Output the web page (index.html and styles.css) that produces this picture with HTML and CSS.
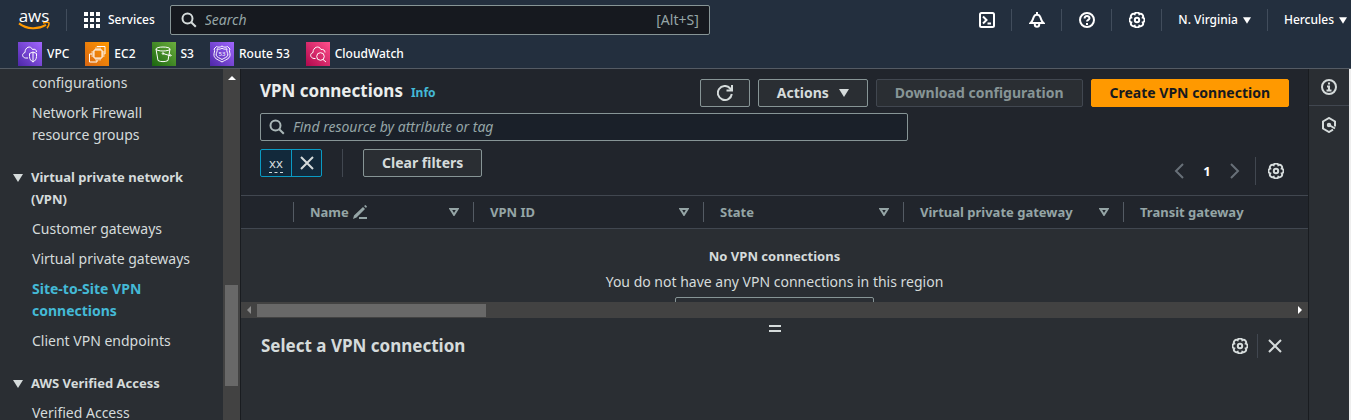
FILE: index.html
```html
<!DOCTYPE html>
<html lang="en">
<head>
<meta charset="utf-8">
<title>VPN connections</title>
<link rel="stylesheet" href="styles.css">
</head>
<body>
<svg class="sprite" aria-hidden="true">
  <symbol id="gear" viewBox="0 0 16 16"><path d="M13.8 10.4A2.5 2.5 0 0 1 10.4 13.8A2.5 2.5 0 0 1 5.6 13.8A2.5 2.5 0 0 1 2.2 10.4A2.5 2.5 0 0 1 2.2 5.6A2.5 2.5 0 0 1 5.6 2.2A2.5 2.5 0 0 1 10.4 2.2A2.5 2.5 0 0 1 13.8 5.6A2.5 2.5 0 0 1 13.8 10.4Z"/><circle cx="8" cy="8" r="2.200"/></symbol>
  <symbol id="close" viewBox="0 0 16 16"><path d="M2 2l12 12M14 2L2 14"/></symbol>
  <symbol id="search" viewBox="0 0 16 16"><circle cx="6.500" cy="6.500" r="5"/><path d="M10.200 10.200l4.600 4.600"/></symbol>
  <symbol id="caret" viewBox="0 0 10 8"><path d="M0 0h10L5 8z"/></symbol>
  <symbol id="sort" viewBox="0 0 10 8"><path d="M1.4 1h7.2L5 6.8z"/></symbol>
</svg>

<header class="topnav">
  <div class="topnav-row">
    <a class="logo" href="#" aria-label="AWS home">
      <span class="logo-word">aws</span>
      <svg class="logo-smile" viewBox="0 0 32 8"><path class="smile" d="M1 1.4C9 7.6 20 7.7 28 2.9"/><path class="smile tip" d="M25 .9C28 .2 30.5.2 30.9.9C31.2 2 30.3 4.6 29 6.3"/></svg>
    </a>
    <span class="divider"></span>
    <button class="nav-button services" type="button">
      <svg class="waffle" viewBox="0 0 16 16"><path d="M0 0h4v4H0zM6 0h4v4H6zM12 0h4v4h-4zM0 6h4v4H0zM6 6h4v4H6zM12 6h4v4h-4zM0 12h4v4H0zM6 12h4v4H6zM12 12h4v4h-4z"/></svg>
      Services
    </button>
    <label class="global-search">
      <svg class="icon bright"><use href="#search"/></svg>
      <input type="search" placeholder="Search" aria-label="Search">
      <span>[Alt+S]</span>
    </label>
    <nav class="utilities" aria-label="Utilities">
      <button class="nav-button tool" type="button" aria-label="CloudShell"><svg class="icon" viewBox="0 0 16 16"><rect x="1" y="1" width="14" height="14" rx="1.5"/><path d="M4 4.5L7.5 8L4 11.5M8.5 11.5H12"/></svg></button>
      <button class="nav-button tool" type="button" aria-label="Notifications"><svg class="icon" viewBox="0 0 16 16"><path d="M8 0v2M1.500 11h13C12 9 12.500 7.500 11 4.500C10 2.200 6 2.200 5 4.500C3.500 7.500 4 9 1.500 11zM5.800 11.500v1a2.200 2.200 0 0 0 4.400 0v-1"/></svg></button>
      <button class="nav-button tool" type="button" aria-label="Help"><svg class="icon" viewBox="0 0 16 16"><circle cx="8" cy="8" r="7"/><path d="M5.600 6.500C5.600 3.300 10.500 3.400 10.500 6.200C10.500 7.800 8 8 8 9.600M8 11v2"/></svg></button>
      <button class="nav-button tool" type="button" aria-label="Settings"><svg class="icon"><use href="#gear"/></svg></button>
      <button class="nav-button menu" type="button">N. Virginia <svg class="caret small"><use href="#caret"/></svg></button>
      <button class="nav-button menu account" type="button">Hercules <svg class="caret small"><use href="#caret"/></svg></button>
    </nav>
  </div>
  <nav class="favorites" aria-label="Favorites">
    <a href="#"><svg class="tile purple" viewBox="0 0 24 24"><path d="M10 16H7.500C4 15.500 3.500 11.500 7 10.500C7 5 12.500 3 14.500 7.500C17 6.500 18.500 8 18.500 10M11.500 11.500L15 10L18.500 11.500V14.500C18.500 17 17 19 15 20C13 19 11.500 17 11.500 14.500zM15 10v10"/></svg>VPC</a>
    <a href="#"><svg class="tile orange" viewBox="0 0 24 24"><path d="M9 8h8v8H9zM11 5.500V8M13 5.500V8M15 5.500V8M11 16v2.500M13 16v2.500M15 16v2.500M6.500 10H9M6.500 12H9M6.500 14H9M17 10h2.500M17 12h2.500M17 14h2.500M12 5V4.500H20V12H19.500M7 12H4.500V20H12V18"/></svg>EC2</a>
    <a href="#"><svg class="tile green" viewBox="0 0 24 24"><ellipse cx="11" cy="7" rx="7" ry="2"/><path d="M4 7l2 11.500C8.500 20 13.500 20 16 18.500L18 7M11 11.500L19 14C20 13.600 18.500 12.600 17.300 12"/><circle cx="11" cy="11.500" r=".8"/></svg>S3</a>
    <a href="#"><svg class="tile violet" viewBox="0 0 24 24"><path d="M12 4C10 5.500 8 5.500 6.500 4.500L4 7C5.500 9 3.500 11 4 13.500C4.500 17 9 18 12 20C15 18 19.500 17 20 13.500C20.500 11 18.500 9 20 7L17.500 4.500C16 5.500 14 5.500 12 4zM12 6.200C10 7.400 8.500 7.400 7 6.800C8 9.500 5.800 11 6.200 13.200C6.700 15.500 10 16 12 17.500C14 16 17.300 15.500 17.800 13.200C18.200 11 16 9.500 17 6.800C15.500 7.400 14 7.400 12 6.200z"/><text x="12" y="14">53</text></svg>Route 53</a>
    <a href="#"><svg class="tile pink" viewBox="0 0 24 24"><path d="M9.500 16.500H8C4 16 3.500 11.500 7 10.500C7 5 13 3 15 7.500C17.500 7 19 8.500 19 10.500M17 17.500L20 20"/><circle cx="14.500" cy="14.500" r="3.800"/></svg>CloudWatch</a>
  </nav>
</header>

<div class="shell">
  <div class="sidebar">
    <nav class="sidebar-nav" aria-label="VPC">
      <ul>
        <li><a href="#">configurations</a></li>
        <li><a href="#">Network Firewall<br>resource groups</a></li>
      </ul>
      <button class="group" type="button" aria-expanded="true"><svg class="caret"><use href="#caret"/></svg><span>Virtual private network<br>(VPN)</span></button>
      <ul>
        <li><a href="#">Customer gateways</a></li>
        <li><a href="#">Virtual private gateways</a></li>
        <li><a class="active" href="#" aria-current="page">Site-to-Site VPN<br>connections</a></li>
        <li><a href="#">Client VPN endpoints</a></li>
      </ul>
      <button class="group" type="button" aria-expanded="true"><svg class="caret"><use href="#caret"/></svg><span>AWS Verified Access</span></button>
      <ul>
        <li><a href="#">Verified Access</a></li>
      </ul>
    </nav>
    <div class="vscroll" aria-hidden="true">
      <svg class="arrow-up" viewBox="0 0 8 4"><path d="M4 0l4 4H0z"/></svg>
      <div class="vthumb"></div>
    </div>
  </div>

  <main class="content">
    <section class="table-pane">
      <div class="title-row">
        <div class="title">
          <h1>VPN connections</h1>
          <a class="info" href="#">Info</a>
        </div>
        <div class="actions">
          <button class="button refresh" type="button" aria-label="Refresh"><svg class="icon" viewBox="0 0 16 16"><path d="M14.800 9A7 7 0 1 1 13 3.200L15 5M15 0v5.500H9.500"/></svg></button>
          <button class="button" type="button">Actions <svg class="caret"><use href="#caret"/></svg></button>
          <button class="button" type="button" disabled>Download configuration</button>
          <button class="button primary" type="button">Create VPN connection</button>
        </div>
      </div>
      <div class="filter-area">
        <div class="filters">
          <label class="resource-search">
            <svg class="icon"><use href="#search"/></svg>
            <input type="search" placeholder="Find resource by attribute or tag" aria-label="Find resource by attribute or tag">
          </label>
          <div class="tokens">
            <div class="token">
              <button class="token-label" type="button"><span>xx</span></button>
              <button class="token-remove" type="button" aria-label="Remove filter"><svg class="icon"><use href="#close"/></svg></button>
            </div>
            <span class="divider tall"></span>
            <button class="button" type="button">Clear filters</button>
          </div>
        </div>
        <div class="pagination">
          <button class="plain" type="button" aria-label="Previous page"><svg class="icon dim" viewBox="0 0 16 16"><path d="M12 1L5 8l7 7"/></svg></button>
          <button class="plain page" type="button">1</button>
          <button class="plain" type="button" aria-label="Next page"><svg class="icon dim" viewBox="0 0 16 16"><path d="M4 1l7 7l-7 7"/></svg></button>
          <span class="divider tall"></span>
          <button class="plain" type="button" aria-label="Preferences"><svg class="icon"><use href="#gear"/></svg></button>
        </div>
      </div>
      <table>
        <colgroup><col class="c-select"><col class="c-name"><col class="c-id"><col class="c-state"><col class="c-gateway"><col></colgroup>
        <thead>
          <tr>
            <th><div class="cell"></div></th>
            <th><div class="cell">Name <svg class="pencil" viewBox="0 0 14 14"><path class="fill" d="M1 10.500L10 2l2 2L3.500 12.500L0 14zM11 1l1.500-1L14 1.500L13 3z"/><path d="M6 13h8"/></svg><svg class="sort"><use href="#sort"/></svg></div></th>
            <th><div class="cell">VPN ID<svg class="sort"><use href="#sort"/></svg></div></th>
            <th><div class="cell">State<svg class="sort"><use href="#sort"/></svg></div></th>
            <th><div class="cell">Virtual private gateway<svg class="sort"><use href="#sort"/></svg></div></th>
            <th><div class="cell">Transit gateway</div></th>
          </tr>
        </thead>
        <tbody>
          <tr><td colspan="6">
            <div class="empty">
              <strong>No VPN connections</strong>
              <span class="empty-text">You do not have any VPN connections in this region</span>
              <button class="button empty-action" type="button" aria-label="New connection"></button>
            </div>
          </td></tr>
        </tbody>
      </table>
    </section>
    <div class="hscroll" aria-hidden="true">
      <svg class="arrow-left" viewBox="0 0 4 8"><path d="M4 0v8L0 4z"/></svg>
      <div class="hthumb"></div>
      <svg class="arrow-right" viewBox="0 0 4 8"><path d="M0 0v8l4-4z"/></svg>
    </div>
    <section class="split-panel">
      <button class="grip" type="button" aria-label="Resize panel"></button>
      <div class="panel-head">
        <h2>Select a VPN connection</h2>
        <button class="plain" type="button" aria-label="Panel preferences"><svg class="icon"><use href="#gear"/></svg></button>
        <span class="divider tall"></span>
        <button class="plain" type="button" aria-label="Close panel"><svg class="icon"><use href="#close"/></svg></button>
      </div>
    </section>
  </main>

  <aside class="rail">
    <button class="rail-button" type="button" aria-label="Info"><svg class="icon" viewBox="0 0 16 16"><circle cx="8" cy="8" r="7"/><path d="M8 3.500v2M6 7.500h2v4M5.500 11.500h5"/></svg></button>
    <button class="rail-button" type="button" aria-label="Diagnostics"><svg class="icon" viewBox="0 0 16 16"><path d="M14 9.500V4.500L8 1L2 4.500v7L8 15l4-2.300M8 8l6 3.500"/><circle cx="8" cy="8" r="1.200"/></svg></button>
  </aside>
</div>
</body>
</html>
```
FILE: styles.css
```css
* { box-sizing: border-box; }

body {
  margin: 0;
  height: 100vh;
  display: flex;
  flex-direction: column;
  overflow: hidden;
  background: #2a2e33;
  color: #d5dbdb;
  font: 13px/22px "Noto Sans", "Open Sans", sans-serif;
}

button, input { font: inherit; color: inherit; }
button { margin: 0; padding: 0; border: 0; background: none; cursor: pointer; }
a { color: inherit; text-decoration: none; }
ul { margin: 0; padding: 0; list-style: none; }
h1, h2 { margin: 0; font-size: 17px; line-height: 24px; font-weight: 700; }
input { min-width: 0; flex: 1; padding: 0; border: 0; outline: 0; background: none; }
input::placeholder { color: #95a5a6; font-style: italic; opacity: 1; }

.sprite { display: none; }
.icon { width: 16px; height: 16px; flex: none; display: block; fill: none; stroke: currentColor; stroke-width: 2; }
.caret { width: 10px; height: 8px; flex: none; fill: currentColor; }
.caret.small { width: 8px; height: 7px; }
.divider { width: 1px; height: 22px; flex: none; background: #414d5c; }
.divider.tall { height: 28px; background: #414750; }

/* Global navigation */
.topnav { flex: none; background: #232f3e; border-bottom: 1px solid #545b64; color: #fff; }
.topnav-row { display: flex; align-items: center; height: 40px; padding-left: 18px; }
.logo { display: flex; flex-direction: column; width: 32px; margin-right: 16px; }
.logo-word { font: 500 17px/12px "Open Sans", sans-serif; text-align: center; }
.logo-smile { display: block; width: 32px; height: 8px; }
.smile { fill: none; stroke: #f90; stroke-width: 2; }
.smile.tip { stroke-width: 1.5; }
.nav-button { display: flex; align-items: center; font-size: 12px; font-weight: 500; }
.services { gap: 8px; margin: 0 15px 0 17px; }
.waffle { width: 16px; height: 16px; fill: #fff; }
.global-search {
  display: flex;
  align-items: center;
  gap: 8px;
  flex: 0 1 540px;
  height: 30px;
  padding: 0 10px;
  border: 1px solid #879596;
  border-radius: 2px;
  background: #16191f;
  color: #95a5a6;
  font-size: 14px;
}
.bright { color: #d5dbdb; }
.utilities { display: flex; align-items: center; margin-left: auto; }
.tool { width: 50px; height: 22px; justify-content: center; border-right: 1px solid #414d5c; }
.menu { height: 22px; gap: 5px; padding: 0 16px; }
.menu.account { padding-right: 4px; border-left: 1px solid #414d5c; }
.favorites { display: flex; gap: 16px; height: 28px; padding: 2px 18px; font-size: 12px; font-weight: 500; }
.favorites a { display: flex; align-items: center; gap: 5px; }
.tile { width: 24px; height: 24px; fill: none; stroke: #fff; stroke-width: 1; }
.tile text { font: 6px "Noto Sans", sans-serif; fill: #fff; stroke: none; text-anchor: middle; }
.purple, .violet { background: linear-gradient(45deg, #4d27a8, #a166ff); }
.orange { background: linear-gradient(45deg, #d86613, #f90); }
.green { background: linear-gradient(45deg, #1b660f, #6cae3e); }
.pink { background: linear-gradient(45deg, #b0084d, #ff4f8b); }

.shell { display: flex; flex: 1; min-height: 0; padding-right: 2px; background: linear-gradient(#eee, #eee) right / 2px 100% no-repeat; }

/* Side navigation */
.sidebar { display: flex; flex: 0 0 240px; overflow: hidden; background: #2a2e33; }
.sidebar-nav { flex: 1; padding: 3px 12px; }
.sidebar-nav li { margin-bottom: 8px; padding-left: 20px; }
.sidebar-nav a { display: block; font-size: 14px; }
.sidebar-nav .active { color: #44b9d6; font-weight: 700; }
.group { display: flex; gap: 8px; margin: 20px 0 8px 1px; font-weight: 700; text-align: left; white-space: nowrap; }
.group .caret { margin-top: 8px; }
.vscroll { display: flex; flex-direction: column; width: 17px; padding: 7px 2px 34px; background: #424242; }
.arrow-up { flex: none; width: 8px; height: 4px; margin: 0 auto; fill: #fff; }
.vthumb { height: 101px; margin-top: auto; background: #686868; }

/* Main column */
.content { display: flex; flex: 1; flex-direction: column; min-width: 0; border-left: 1px solid #191c20; border-right: 1px solid #191c20; }
.table-pane { flex: 1; min-height: 0; overflow: hidden; background: #21252c; }
.title-row { display: flex; padding: 10px 19px 6px; white-space: nowrap; }
.title { display: flex; align-items: baseline; gap: 8px; }
.title h1 { color: #eaeded; }
.info { color: #44b9d6; font-size: 12px; font-weight: 700; }
.actions { display: flex; gap: 8px; margin-left: auto; }
.button {
  display: flex;
  align-items: center;
  justify-content: center;
  gap: 10px;
  height: 28px;
  padding: 0 18px;
  border: 1px solid #879596;
  border-radius: 2px;
  background: #2a2e33;
  font-size: 14px;
  font-weight: 700;
  white-space: nowrap;
}
.button.refresh { width: 50px; padding: 0; }
.button:disabled { border-color: #414750; color: #879596; }
.button.primary { border-color: #f90; background: #f90; color: #16191f; }
.filter-area { display: flex; justify-content: space-between; align-items: flex-end; padding: 0 24px 10px 19px; }
.filters { flex: 0 1 648px; padding-bottom: 8px; }
.resource-search {
  display: flex;
  align-items: center;
  gap: 8px;
  height: 28px;
  margin-bottom: 8px;
  padding: 0 8px;
  border: 1px solid #879596;
  border-radius: 2px;
  background: #1a2029;
  color: #aab7b8;
  font-size: 14px;
}
.tokens { display: flex; gap: 20px; }
.token { display: flex; height: 28px; border: 1px solid #0a9bc4; border-radius: 2px; background: #12293b; }
.token-label { width: 31px; border-right: 1px solid #0a9bc4; }
.token-label span { border-bottom: 1px dashed #d5dbdb; }
.token-remove { display: flex; align-items: center; justify-content: center; width: 29px; }
.pagination { display: flex; align-items: center; gap: 12px; }
.page { width: 16px; color: #fff; font-weight: 700; }
.dim { color: #687078; }
.plain { display: block; }

table { width: 100%; table-layout: fixed; border-collapse: separate; border-spacing: 0; }
.c-select { width: 53px; }
.c-name { width: 180px; }
.c-id { width: 230px; }
.c-state { width: 200px; }
.c-gateway { width: 220px; }
th { height: 34px; padding: 0; border-top: 1px solid #414750; border-bottom: 1px solid #414750; color: #95a5a6; text-align: left; white-space: nowrap; }
.cell { display: flex; align-items: center; height: 20px; padding: 0 14px 0 16px; border-right: 1px solid #545b64; }
th:last-child .cell { border-right: 0; }
.sort { width: 10px; height: 8px; margin-left: auto; fill: none; stroke: currentColor; stroke-width: 2; }
.pencil { width: 14px; height: 14px; margin-left: 4px; fill: none; stroke: currentColor; stroke-width: 2; }
.pencil .fill { fill: currentColor; stroke: none; }
td { height: 90px; padding: 16px 0; background: #2a2e33; vertical-align: top; }
.empty { display: flex; flex-direction: column; align-items: center; gap: 4px; }
.empty-text { font-size: 14px; }
.empty-action { width: 199px; }

.hscroll { display: flex; align-items: center; flex: none; height: 16px; padding: 0 6px; background: #424242; }
.arrow-left, .arrow-right { width: 4px; height: 8px; fill: #8b8b8b; }
.arrow-right { margin-left: auto; fill: #fff; }
.hthumb { width: 229px; height: 13px; margin-left: 6px; background: #686868; }

/* Split panel */
.split-panel { flex: 0 0 102px; background: #2a2e33; }
.grip { display: block; width: 12px; height: 7px; margin: 7px auto 2px; border: solid #d5dbdb; border-width: 2px 0; }
.panel-head { display: flex; align-items: center; gap: 9px; padding: 0 25px 0 20px; }
.panel-head h2 { margin-right: auto; }
.panel-head .divider { height: 24px; }

/* Tools rail */
.rail { flex: 0 0 40px; background: #2a2e33; }
.rail-button { display: flex; align-items: center; justify-content: center; width: 100%; height: 37px; }
.rail-button:first-child { border-bottom: 1px solid #414750; }
```
